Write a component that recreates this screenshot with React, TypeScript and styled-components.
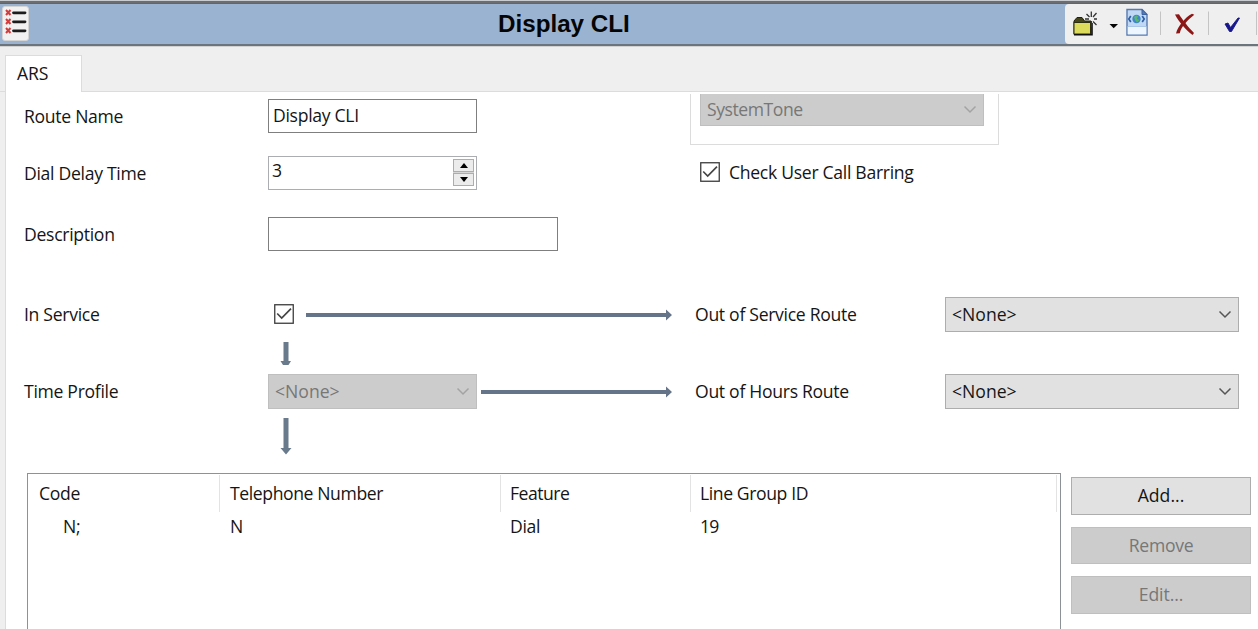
import React from "react";
import styled, { createGlobalStyle } from "styled-components";

const GlobalStyle = createGlobalStyle`
  * { box-sizing: border-box; }
  body { margin: 0; overflow: hidden; background: #efefef; }
`;

const Window = styled.div`
  width: 1258px;
  height: 629px;
  display: flex;
  flex-direction: column;
  overflow: hidden;
  background: #efefef;
  color: #151515;
  font: 17.6px/24px "Open Sans", "Noto Sans", sans-serif;
`;

const TopEdge = styled.div`
  flex: none;
  height: 4px;
  background: linear-gradient(#c9ccd0 0 1px, #6b6d6f 1px 3px, #5f666d 3px 4px);
`;

const Header = styled.header`
  flex: none;
  height: 42px;
  display: flex;
  justify-content: space-between;
  background: #9ab3d1;
  border-bottom: 2px solid #6c747c;
  box-shadow: 0 1px 0 #d2d2d2;
`;

const HeaderIcon = styled.div`
  width: 27px;
  height: 35px;
  margin: 2px 0 0 2px;
  border-radius: 3px;
  background: #f1f1f1;
  border: 1px solid #d5d5d5;
`;

const Title = styled.h1`
  margin: 0 0 0 469px;
  flex: 1;
  font: bold 24.2px/40px "Liberation Sans", Arial, sans-serif;
  color: #050505;
`;

const Toolbar = styled.div`
  width: 193px;
  height: 40px;
  background: #efefef;
  border-radius: 4px 0 0 4px;
`;

const TabStrip = styled.div`
  flex: none;
  height: 46px;
  padding: 9px 0 0 5px;
  display: flex;
  box-shadow: inset 0 -1px 0 #dcdcdc;
`;

const Tab = styled.div`
  width: 77px;
  height: 37px;
  padding: 5px 0 0 11px;
  background: #fff;
  border: 1px solid #dcdcdc;
  border-bottom: 0;
`;

const Panel = styled.main`
  flex: 1;
  min-height: 0;
  margin-left: 5px;
  padding-left: 18px;
  background: #fff;
  border-left: 1px solid #dcdcdc;
  overflow: hidden;
`;

const Text = styled.span<{ $spacing?: number }>`
  white-space: pre;
  letter-spacing: ${(p) => p.$spacing ?? -0.3}px;
`;

const Upper = styled.section`
  display: flex;
  height: 205px;
`;

const LeftColumn = styled.div`
  width: 666px;
  padding-top: 6px;
`;

const Field = styled.div<{ $gap?: number }>`
  display: flex;
  align-items: center;
  height: 35px;
  margin-bottom: ${(p) => p.$gap ?? 0}px;
`;

const Caption = styled.label<{ $width: number }>`
  flex: none;
  width: ${(p) => p.$width}px;
  padding-top: 1px;
`;

const FlowCaption = styled(Caption)`
  padding: 0 0 2px;
`;

const Input = styled.div<{ $width: number; $color?: string; $pad: number; $top?: number }>`
  width: ${(p) => p.$width}px;
  height: 34px;
  display: flex;
  justify-content: space-between;
  padding: ${(p) => p.$top ?? 3}px 2px 0 ${(p) => p.$pad}px;
  background: #fff;
  border: 1px solid ${(p) => p.$color ?? "#7f7f7f"};
`;

const Spinner = styled.div`
  width: 21px;
  height: 27px;
  margin-top: 1px;
  display: flex;
  flex-direction: column;
  gap: 1px;
  background: #d6d6d6;
`;

const SpinButton = styled.div`
  flex: 1;
  display: flex;
  align-items: center;
  justify-content: center;
  background: #ececec;
  border: 1px solid #adadad;
`;

const RightColumn = styled.div`
  padding-top: 2px;
`;

const GroupBox = styled.div`
  width: 309px;
  height: 51px;
  padding-left: 9px;
  border: 1px solid #dcdcdc;
  border-top: 0;
`;

const Select = styled.div<{ $width: number; $height?: number; $disabled?: boolean; $cut?: boolean }>`
  flex: none;
  width: ${(p) => p.$width}px;
  height: ${(p) => p.$height ?? 35}px;
  display: flex;
  align-items: center;
  justify-content: space-between;
  padding: 0 6px 1px 6px;
  color: ${(p) => (p.$disabled ? "#777" : "#151515")};
  background: ${(p) => (p.$disabled ? "#ccc" : "#e1e1e1")};
  border: 1px solid ${(p) => (p.$disabled ? "#bfbfbf" : "#adadad")};
  ${(p) => (p.$cut ? "border-top: 0; padding-bottom: 2px;" : "")}
`;

const CheckRow = styled.div`
  display: flex;
  align-items: center;
  gap: 9px;
  margin: 15px 0 0 10px;
`;

const CheckSlot = styled.div`
  height: 22px;
  line-height: 0;
`;

const Flow = styled.section`
  height: 176px;
`;

const Space = styled.div<{ $width: number }>`
  flex: none;
  width: ${(p) => p.$width}px;
`;

const DownArrow = styled.div<{ $height: number; $top: number }>`
  height: ${(p) => p.$height}px;
  padding: ${(p) => p.$top}px 0 0 256px;
  line-height: 0;
`;

const Lower = styled.section`
  display: flex;
  height: 170px;
  padding-left: 3px;
`;

const Table = styled.div`
  width: 1034px;
  padding-top: 1px;
  border: 1px solid #8d9299;
  border-bottom: 0;
`;

const TableRow = styled.div`
  display: grid;
  grid-template-columns: 192px 281px 190px 366px;
`;

const HeadCell = styled.div<{ $pad: number }>`
  height: 37px;
  padding: 6px 0 0 ${(p) => p.$pad}px;
  border-right: 1px solid #e3e3e3;
`;

const Cell = styled.div<{ $pad: number }>`
  padding: 2px 0 0 ${(p) => p.$pad}px;
`;

const Actions = styled.div`
  display: flex;
  flex-direction: column;
  gap: 12px;
  padding: 4px 0 0 10px;
`;

const Button = styled.button<{ $off?: boolean }>`
  width: 180px;
  height: 37.5px;
  padding: 0 0 1px;
  font: inherit;
  color: ${(p) => (p.$off ? "#777" : "#151515")};
  background: ${(p) => (p.$off ? "#ccc" : "#e1e1e1")};
  border: 1px solid ${(p) => (p.$off ? "#bfbfbf" : "#adadad")};
`;

const Chevron = ({ color = "#555" }: { color?: string }) => (
  <svg width="14" height="10" viewBox="0 0 14 10" fill="none">
    <path d="M1.5 2.5 L7 8 L12.5 2.5" stroke={color} strokeWidth="1.5" />
  </svg>
);

const Check = () => (
  <svg width="20" height="20" viewBox="0 0 20 20" fill="none">
    <rect x=".75" y=".75" width="18.5" height="18.5" fill="#fff" stroke="#3c3c3c" strokeWidth="1.3" />
    <path d="M3.2 9.5 L7.7 14 L17 4.7" stroke="#444" strokeWidth="1.7" />
  </svg>
);

const RightArrow = ({ width }: { width: number }) => (
  <svg width={width} height="12" viewBox={`0 0 ${width} 12`}>
    <path d={`M0 4 H${width - 6} V.5 L${width} 6 L${width - 6} 11.5 V8 H0 Z`} fill="#657488" />
  </svg>
);

const ListIcon = () => (
  <svg width="25" height="33" viewBox="0 0 25 33">
    {[5.5, 14.5, 23.5].map((y) => (
      <g key={y} strokeWidth="2">
        <path d={`M3 ${y - 2.5} L7.5 ${y + 2.5} M7.5 ${y - 2.5} L3 ${y + 2.5}`} stroke="#d43b3b" />
        <path d={`M10.5 ${y + 0.3} H22`} stroke="#1c1c1c" strokeWidth="2.8" strokeLinecap="round" />
      </g>
    ))}
  </svg>
);

const ToolIcons = () => (
  <svg width="193" height="40" viewBox="0 0 193 40" fill="none">
    <path d="M9 30 V17 L12 13.5 H17 L19.5 17 H26 V30 Z" fill="#45451c" stroke="#22220c" />
    <rect x="9" y="18.5" width="16.5" height="11.5" fill="#dddb5b" stroke="#2c2c10" />
    <path d="M9 30.7 H27 V19" stroke="#111" strokeWidth="1.6" />
    <path d="M26.3 7.5 V13 M26.3 17 V23 M20 15 H24 M29 15 H32 M21.5 10 L24.5 13 M31.5 9 L28 13 M28 17.5 L31.5 21" stroke="#333" strokeWidth="1.3" />
    <path d="M44.5 20 H53 L48.7 24.3 Z" fill="#050505" />
    <path d="M62 5.5 H77 L82 10.5 V31 H62 Z" fill="#c0d8f3" stroke="#5679b0" strokeWidth="1.4" />
    <path d="M62.7 22.5 H81.4 V30.4 H62.7 Z" fill="#edf5ff" />
    <path d="M62.7 22.5 H81.4" stroke="#a9c5e8" />
    <path d="M77 5.5 V10.5 H82 Z" fill="#587bb2" stroke="#3e62a0" />
    <circle cx="71.5" cy="15" r="4.2" fill="#3d86c9" />
    <path d="M69 13 Q71 10.5 73 12 L72 15 L74.5 16 L72 18.5 L70 16 Z" fill="#59b66f" />
    <path d="M65.8 12 L63.8 15 L65.8 18 M77.2 12 L79.2 15 L77.2 18" stroke="#2f5eaa" strokeWidth="1.7" />
    <path d="M95.5 7.5 V31 M143.5 7.5 V31 M191.5 7.5 V31" stroke="#c4c4c4" />
    <path d="M110 10.5 L114 10.3 C117 15 123 23 129 29 L127.5 31 C121 26 113.5 17.5 110 10.5 Z" fill="#8d1717" />
    <path d="M129.3 10.8 C123 15.5 116 23 114.8 29.3 L111 29.5 C113 22 120 13.5 127 9.8 Z" fill="#8d1717" />
    <path d="M160 20 L163 19 L165.5 23.5 L173 14 H174.5 L166.5 27.5 H164.5 Z" fill="#17178b" stroke="#17178b" strokeWidth=".9" />
  </svg>
);

export default function App() {
  return (
    <Window>
      <GlobalStyle />
      <TopEdge />
      <Header>
        <HeaderIcon><ListIcon /></HeaderIcon>
        <Title>Display CLI</Title>
        <Toolbar><ToolIcons /></Toolbar>
      </Header>
      <TabStrip>
        <Tab><Text $spacing={-0.1}>ARS</Text></Tab>
      </TabStrip>
      <Panel>
        <Upper>
          <LeftColumn>
            <Field $gap={22}>
              <Caption $width={244}><Text>Route Name</Text></Caption>
              <Input $width={209} $pad={4}><Text>Display CLI</Text></Input>
            </Field>
            <Field $gap={26}>
              <Caption $width={244}><Text>Dial Delay Time</Text></Caption>
              <Input $width={209} $pad={3} $top={1} $color="#abadb3">
                <Text>3</Text>
                <Spinner>
                  <SpinButton><svg width="8" height="5"><path d="M0 5 L4 0 L8 5Z" /></svg></SpinButton>
                  <SpinButton><svg width="8" height="5"><path d="M0 0 H8 L4 5Z" /></svg></SpinButton>
                </Spinner>
              </Input>
            </Field>
            <Field>
              <Caption $width={244}><Text>Description</Text></Caption>
              <Input $width={290} $pad={4} />
            </Field>
          </LeftColumn>
          <RightColumn>
            <GroupBox>
              <Select $width={284} $height={32} $disabled $cut>
                <Text $spacing={-0.45}>SystemTone</Text><Chevron color="#a3a3a3" />
              </Select>
            </GroupBox>
            <CheckRow><Check /><Text>Check User Call Barring</Text></CheckRow>
          </RightColumn>
        </Upper>
        <Flow>
          <Field>
            <FlowCaption $width={250}><Text>In Service</Text></FlowCaption>
            <CheckSlot><Check /></CheckSlot>
            <Space $width={12} />
            <RightArrow width={366} />
            <Space $width={23} />
            <FlowCaption $width={250}><Text>Out of Service Route</Text></FlowCaption>
            <Select $width={294}><Text $spacing={0}>{"<None>"}</Text><Chevron /></Select>
          </Field>
          <DownArrow $height={42} $top={10}>
            <svg width="12" height="24"><path d="M3.5 0 H8.5 V19 H11 L8.5 23 H3 L.5 19 H3.5Z" fill="#697a8c" /></svg>
          </DownArrow>
          <Field>
            <FlowCaption $width={244}><Text>Time Profile</Text></FlowCaption>
            <Select $width={209} $disabled><Text $spacing={0}>{"<None>"}</Text><Chevron color="#a3a3a3" /></Select>
            <Space $width={4} />
            <RightArrow width={191} />
            <Space $width={23} />
            <FlowCaption $width={250}><Text>Out of Hours Route</Text></FlowCaption>
            <Select $width={294}><Text $spacing={0}>{"<None>"}</Text><Chevron /></Select>
          </Field>
          <DownArrow $height={60} $top={9}>
            <svg width="12" height="38"><path d="M3.5 0 H8.5 V30 H11.5 L6 36.5 L.5 30 H3.5Z" fill="#697a8c" /></svg>
          </DownArrow>
        </Flow>
        <Lower>
          <Table>
            <TableRow>
              <HeadCell $pad={11}><Text>Code</Text></HeadCell>
              <HeadCell $pad={10}><Text $spacing={-0.4}>Telephone Number</Text></HeadCell>
              <HeadCell $pad={9}><Text $spacing={-0.5}>Feature</Text></HeadCell>
              <HeadCell $pad={9}><Text $spacing={-0.4}>Line Group ID</Text></HeadCell>
            </TableRow>
            <TableRow>
              <Cell $pad={35}><Text>N;</Text></Cell>
              <Cell $pad={10}><Text>N</Text></Cell>
              <Cell $pad={9}><Text>Dial</Text></Cell>
              <Cell $pad={9}><Text $spacing={-0.9}>19</Text></Cell>
            </TableRow>
          </Table>
          <Actions>
            <Button><Text $spacing={0}>Add...</Text></Button>
            <Button $off><Text>Remove</Text></Button>
            <Button $off><Text $spacing={-0.1}>Edit...</Text></Button>
          </Actions>
        </Lower>
      </Panel>
    </Window>
  );
}
